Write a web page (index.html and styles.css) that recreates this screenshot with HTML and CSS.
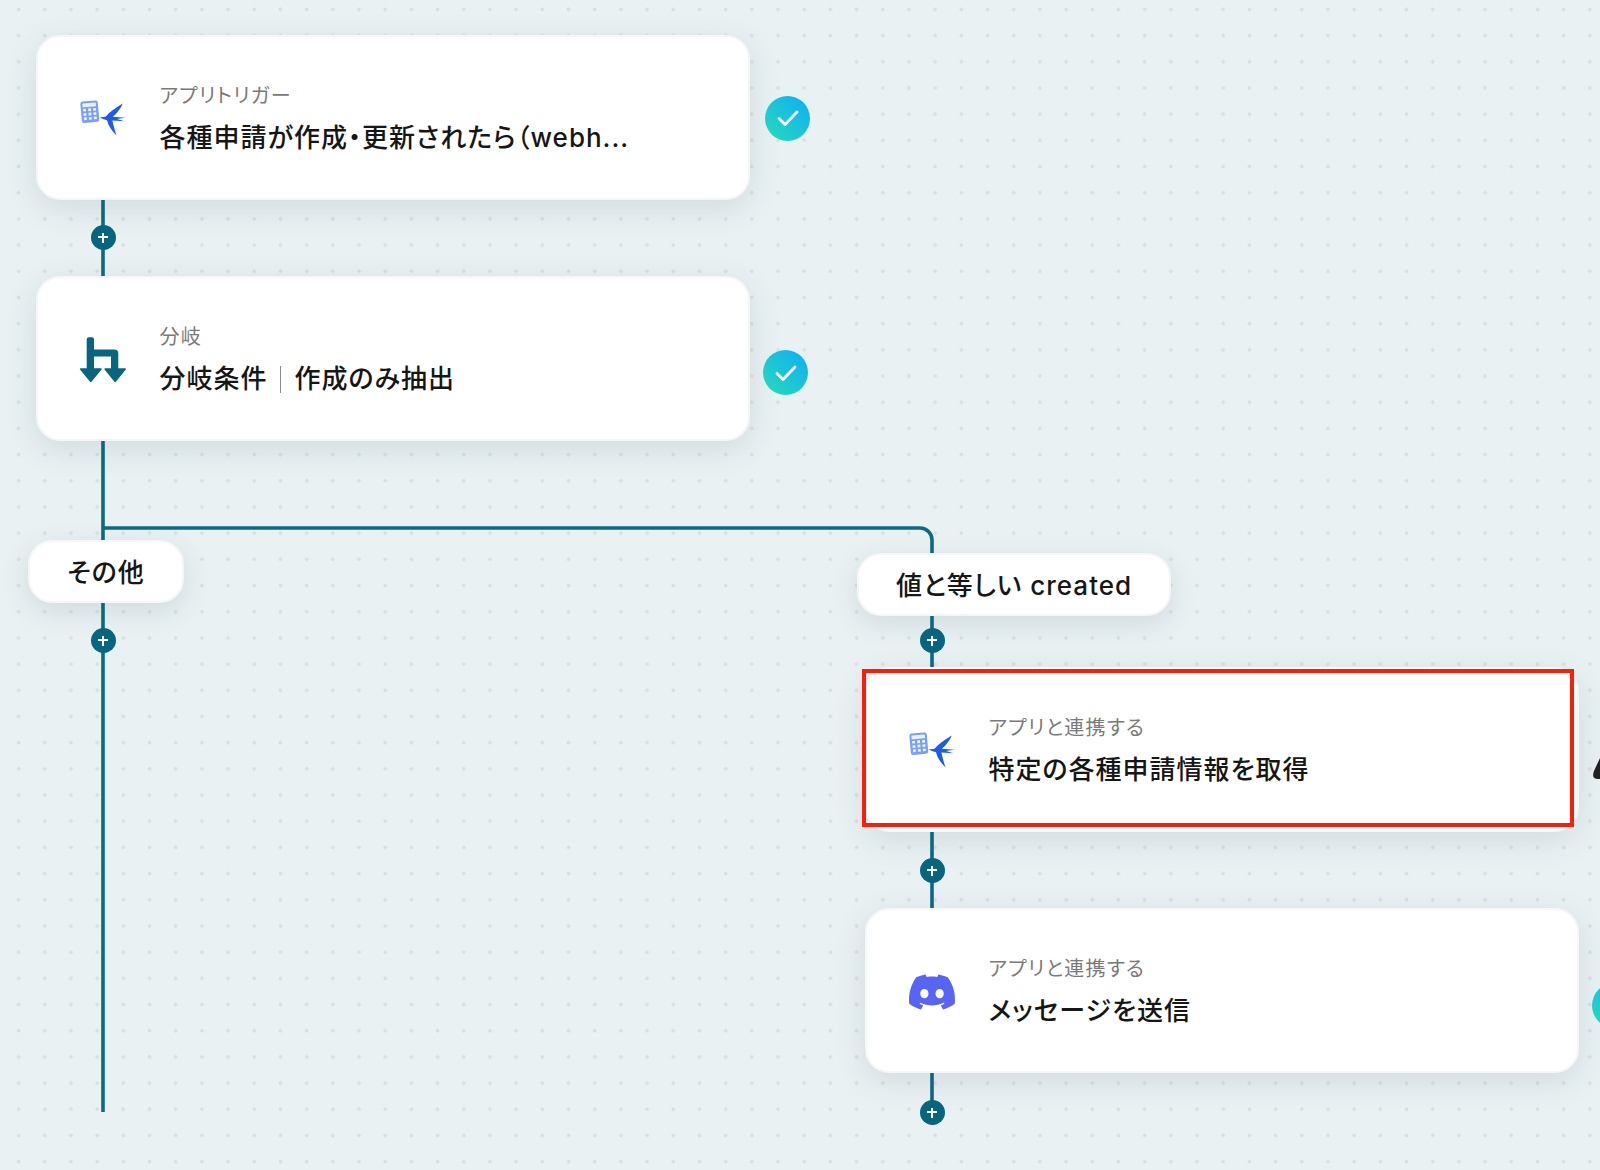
FILE: index.html
```html
<!DOCTYPE html>
<html lang="ja">
<head>
<meta charset="utf-8">
<title>フロー</title>
<link rel="stylesheet" href="styles.css">
</head>
<body>
<main class="canvas">
  <svg class="wires" width="1600" height="1170" viewBox="0 0 1600 1170" fill="none">
    <path d="M103 199V441M103 441V1112M103 528H920a12 12 0 0 1 12 12V1112" stroke="#0b6a85" stroke-width="3.6"/>
    <path d="M1594 771L1600 758V779H1598Q1591 779 1594 771Z" fill="#222"/>
  </svg>

  <section class="card card-a">
    <svg class="app-icon" width="50" height="40" viewBox="0 0 50 40"><use href="#calc-bird"/></svg>
    <div class="copy"><p class="label">アプリトリガー</p><h2 class="title">各種申請が作成・更新されたら（webh...</h2></div>
  </section>
  <section class="card card-b">
    <svg class="app-icon" width="50" height="50" viewBox="0 0 50 50" fill="#07657f">
      <path transform="translate(1 0)" d="M9.7 3.2H13a2 2 0 0 1 2 2V15.500H35.300a4 4 0 0 1 4 4V34.200H46.200a.8.8 0 0 1 .6 1.300L37.100 47.600a1.200 1.200 0 0 1-1.900 0L25.500 35.500a.8.8 0 0 1 .6-1.300H32V22.500H15V34.200H22a.8.8 0 0 1 .6 1.300L12.700 47.600a1.200 1.200 0 0 1-1.900 0L1 35.500a.8.8 0 0 1 .6-1.300H7.700V5.200a2 2 0 0 1 2-2Z"/>
    </svg>
    <div class="copy"><p class="label">分岐</p><h2 class="title">分岐条件<span class="sep"></span>作成のみ抽出</h2></div>
  </section>
  <section class="card card-c">
    <svg class="app-icon" width="50" height="40" viewBox="0 0 50 40"><use href="#calc-bird"/></svg>
    <div class="copy"><p class="label">アプリと連携する</p><h2 class="title">特定の各種申請情報を取得</h2></div>
  </section>
  <section class="card card-d">
    <svg class="app-icon" width="46" height="46" viewBox="0 -0.5 24 24" fill="#5865f2">
      <path d="M20.317 4.3698a19.7913 19.7913 0 00-4.8851-1.5152.0741.0741 0 00-.0785.0371c-.211.3753-.4447.8648-.6083 1.2495-1.8447-.2762-3.68-.2762-5.4868 0-.1636-.3933-.4058-.8742-.6177-1.2495a.077.077 0 00-.0785-.037 19.7363 19.7363 0 00-4.8852 1.515.0699.0699 0 00-.0321.0277C.5334 9.0458-.319 13.5799.0992 18.0578a.0824.0824 0 00.0312.0561c2.0528 1.5076 4.0413 2.4228 5.9929 3.0294a.0777.0777 0 00.0842-.0276c.4616-.6304.8731-1.2952 1.226-1.9942a.076.076 0 00-.0416-.1057c-.6528-.2476-1.2743-.5495-1.8722-.8923a.077.077 0 01-.0076-.1277c.1258-.0943.2517-.1923.3718-.2914a.0743.0743 0 01.0776-.0105c3.9278 1.7933 8.18 1.7933 12.0614 0a.0739.0739 0 01.0785.0095c.1202.099.246.1981.3728.2924a.077.077 0 01-.0066.1276 12.2986 12.2986 0 01-1.873.8914.0766.0766 0 00-.0407.1067c.3604.698.7719 1.3628 1.225 1.9932a.076.076 0 00.0842.0286c1.961-.6067 3.9495-1.5219 6.0023-3.0294a.077.077 0 00.0313-.0552c.5004-5.177-.8382-9.6739-3.5485-13.6604a.061.061 0 00-.0312-.0286zM8.02 15.3312c-1.1825 0-2.1569-1.0857-2.1569-2.419 0-1.3332.9555-2.4189 2.157-2.4189 1.2108 0 2.1757 1.0952 2.1568 2.419 0 1.3332-.9555 2.4189-2.1569 2.4189zm7.9748 0c-1.1825 0-2.1569-1.0857-2.1569-2.419 0-1.3332.9554-2.4189 2.1569-2.4189 1.2108 0 2.1757 1.0952 2.1568 2.419 0 1.3332-.946 2.4189-2.1568 2.4189Z"/>
    </svg>
    <div class="copy"><p class="label">アプリと連携する</p><h2 class="title">メッセージを送信</h2></div>
  </section>

  <div class="pill pill-a">その他</div>
  <div class="pill pill-b">値と等しい created</div>

  <button class="add add-a" aria-label="追加"></button>
  <button class="add add-b" aria-label="追加"></button>
  <button class="add add-c" aria-label="追加"></button>
  <button class="add add-d" aria-label="追加"></button>
  <button class="add add-e" aria-label="追加"></button>

  <div class="check check-a"><svg width="24" height="24" viewBox="0 0 24 24"><use href="#tick"/></svg></div>
  <div class="check check-b"><svg width="24" height="24" viewBox="0 0 24 24"><use href="#tick"/></svg></div>
  <div class="check check-d"></div>

  <div class="highlight"></div>

  <svg class="defs" width="0" height="0">
    <symbol id="tick" viewBox="0 0 24 24"><path d="M3 12.500l6 6L21 6" fill="none" stroke="#fff" stroke-width="2.800" stroke-linecap="round" stroke-linejoin="round"/></symbol>
    <symbol id="calc-bird" viewBox="0 0 50 40">
      <g transform="translate(1 0) rotate(-5 10 13)">
        <rect x="2" y="3" width="17.500" height="21.500" rx="2.400" fill="#76a0fb"/>
        <rect x="4" y="5" width="13.500" height="3.800" rx=".6" fill="#fff" opacity=".85"/>
        <g fill="#fff" opacity=".9">
          <rect x="4.300" y="10.500" width="2.800" height="2.600"/><rect x="9.300" y="10.500" width="2.800" height="2.600"/><rect x="14.300" y="10.500" width="2.800" height="2.600"/>
          <rect x="4.300" y="14.800" width="2.800" height="2.600"/><rect x="9.300" y="14.800" width="2.800" height="2.600"/><rect x="14.300" y="14.800" width="2.800" height="2.600"/>
          <rect x="4.300" y="19.100" width="2.800" height="2.600"/><rect x="9.300" y="19.100" width="2.800" height="2.600"/><rect x="14.300" y="19.100" width="2.800" height="2.600"/>
        </g>
      </g>
      <path transform="translate(1 0)" d="M20.500 19.400L26.500 18.800C30.500 14 36.500 10 43.700 5.600C42 10 38.500 15 33.800 18.800L46.500 19.700L38 21L45.500 23.200L33.400 22.600C34.500 28 36 33 37.500 37.600C33 33 29.500 28 28 22.200L24 21Z" fill="#1d5ce6"/>
    </symbol>
  </svg>
</main>
</body>
</html>
```

FILE: styles.css
```css
* { box-sizing: border-box; }
html, body { margin: 0; height: 100%; }
body { overflow: hidden; font-family: Inter, "Noto Sans CJK JP", sans-serif; color: #161616; }

.canvas {
  position: relative;
  width: 1600px;
  height: 1170px;
  overflow: hidden;
  background-color: #e9f1f3;
  background-image: radial-gradient(circle, #d9e0e1 1.700px, transparent 2.200px);
  background-size: 26.2px 26.2px;
  background-position: 5.5px -3.7px;
}
.wires { position: absolute; left: 0; top: 0; }
.defs { position: absolute; }

.card {
  position: absolute;
  display: flex;
  align-items: center;
  width: 714px;
  height: 165px;
  padding-left: 40px;
  gap: 31.500px;
  background: #fff;
  border: 2px solid #f4f6f7;
  border-radius: 24px;
  box-shadow: 0 8px 32px rgba(40, 60, 65, .12);
}
.card-a { left: 36px; top: 35px; }
.card-b { left: 36px; top: 276px; }
.card-c { left: 865px; top: 667px; }
.card-d { left: 865px; top: 908px; }

.app-icon { flex: none; width: 50px; }
.copy { display: flex; flex-direction: column; gap: 15px; padding-top: 2px; }
.label { margin: 0; font-size: 20px; line-height: 24px; color: #7a7a7a; letter-spacing: 1.200px; font-feature-settings: "palt"; }
.title { margin: 0; font-size: 26px; line-height: 30px; font-weight: 500; color: #161616; letter-spacing: 1px; font-feature-settings: "palt"; white-space: nowrap; }
.sep { display: inline-block; width: 1px; height: 27px; margin: 0 14px 0 12px; vertical-align: -5px; background: #8b8b8b; }

.pill {
  position: absolute;
  display: flex;
  align-items: center;
  justify-content: center;
  height: 63px;
  padding-bottom: 3px;
  background: #fff;
  border: 2px solid #f4f6f7;
  border-radius: 24px;
  font-size: 26px;
  font-weight: 500;
  letter-spacing: 1px;
  font-feature-settings: "palt";
  box-shadow: 0 8px 28px rgba(40, 60, 65, .12);
}
.pill-a { left: 28px; top: 540px; width: 156px; }
.pill-b { left: 857px; top: 553px; width: 314px; }

.add {
  position: absolute;
  width: 25px;
  height: 25px;
  padding: 0;
  border: 0;
  border-radius: 50%;
  background:
    linear-gradient(#fff, #fff) center / 10px 2.4px no-repeat,
    linear-gradient(#fff, #fff) center / 2.4px 10px no-repeat,
    #07657f;
}
.add-a { left: 90.500px; top: 225px; }
.add-b { left: 90.500px; top: 628px; }
.add-c { left: 919.500px; top: 628px; }
.add-d { left: 919.500px; top: 858px; }
.add-e { left: 919.500px; top: 1100px; }

.check {
  position: absolute;
  display: flex;
  align-items: center;
  justify-content: center;
  width: 45px;
  height: 45px;
  border-radius: 50%;
  background: linear-gradient(45deg, #25d7bd 10%, #12b4ef 85%);
}
.check-a { left: 765px; top: 95.500px; }
.check-b { left: 763px; top: 350px; }
.check-d { left: 1592px; top: 983px; }

.highlight {
  position: absolute;
  left: 862px;
  top: 669px;
  width: 712px;
  height: 158px;
  border: 4px solid #f61f0b;
}
```
